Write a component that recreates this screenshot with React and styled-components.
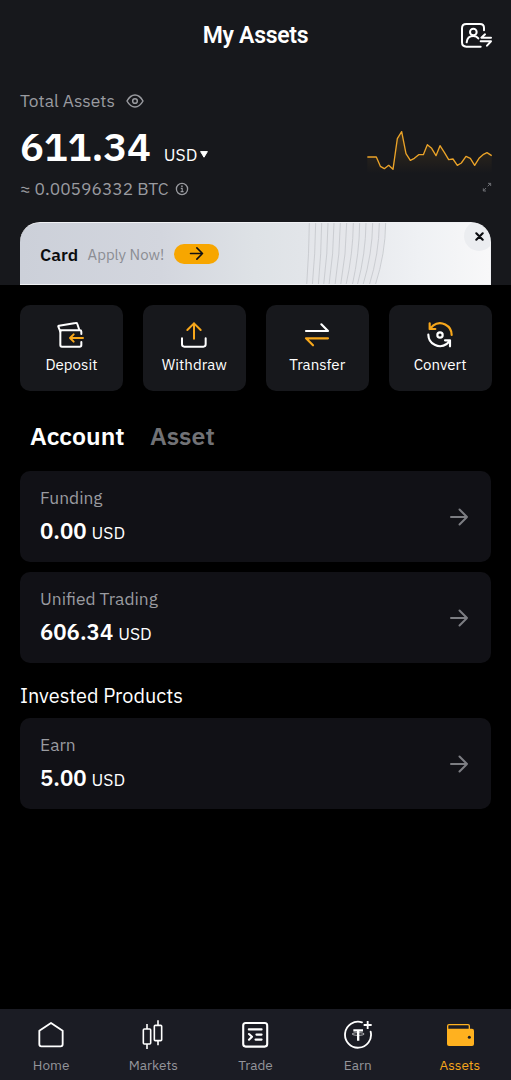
import React, { useState } from "react";
import styled, { createGlobalStyle } from "styled-components";

const gold = "#f7a71b";

const App = () => {
  const [tab, setTab] = useState("Account");
  const [banner, setBanner] = useState(true);

  return (
    <Page>
      <GlobalStyle />
      <Top>
        <Header>
          <Title>My Assets</Title>
          <ProfileButton aria-label="Profile">
            <ProfileIcon />
          </ProfileButton>
        </Header>
        <Overview>
          <Balance>
            <Label>
              <LabelText>Total Assets</LabelText>
              <EyeIcon />
            </Label>
            <Total>
              <Amount>611.34</Amount>
              <Currency>USD</Currency>
              <CaretIcon />
            </Total>
            <Btc>
              <BtcText>≈ 0.00596332 BTC</BtcText>
              <InfoIcon />
            </Btc>
          </Balance>
          <Trend>
            <Chart />
            <ExpandIcon />
          </Trend>
        </Overview>
        {banner && (
          <Banner>
            <Waves />
            <BannerTitle>Card</BannerTitle>
            <BannerText>Apply Now!</BannerText>
            <Pill>
              <Arrow size={15} color="#101014" weight={2.1} />
            </Pill>
            <Close aria-label="Close" onClick={() => setBanner(false)}>
              <svg width="9" height="9" viewBox="0 0 9 9">
                <path d="M1.3 1.3 7.7 7.7M7.7 1.3 1.3 7.7" stroke="#0b0c0f" strokeWidth="2.1" strokeLinecap="round" />
              </svg>
            </Close>
          </Banner>
        )}
      </Top>

      <Actions>
        {actions.map(({ name, Icon }) => (
          <Action key={name}>
            <Icon />
            <ActionName>{name}</ActionName>
          </Action>
        ))}
      </Actions>

      <Tabs>
        {["Account", "Asset"].map((name) => (
          <Tab key={name} $active={tab === name} onClick={() => setTab(name)}>
            {name}
          </Tab>
        ))}
      </Tabs>

      <List>
        <AccountRow name="Funding" value="0.00" />
        <AccountRow name="Unified Trading" value="606.34" />
      </List>
      <Heading>Invested Products</Heading>
      <List>
        <AccountRow name="Earn" value="5.00" />
      </List>

      <Nav>
        {links.map(({ name, Icon }) => (
          <NavItem key={name} $active={name === "Assets"}>
            <Icon />
            <NavName>{name}</NavName>
          </NavItem>
        ))}
      </Nav>
    </Page>
  );
};

const AccountRow = ({ name, value }) => (
  <Row>
    <div>
      <RowName>{name}</RowName>
      <RowValue>
        <strong>{value}</strong>
        <span>USD</span>
      </RowValue>
    </div>
    <Arrow size={20} color="#7c7d82" weight={2} />
  </Row>
);

const Arrow = ({ size, color, weight }) => (
  <svg width={size} height={size} viewBox="0 0 20 20" fill="none" stroke={color} strokeWidth={weight} strokeLinecap="round" strokeLinejoin="round">
    <path d="M2 10H18M10.5 2.500 18 10 10.5 17.500" />
  </svg>
);

const ProfileIcon = () => (
  <svg width="33" height="28" viewBox="330 60 99 84" fill="none" stroke="#fff" strokeWidth="6" strokeLinecap="round" strokeLinejoin="round">
    <path d="M402 88V81Q402 69 390 69H349Q336 69 336 82V124Q336 137 349 137H392" />
    <circle cx="370" cy="93" r="10" />
    <path d="M350 124Q352 105 370 105Q380 105 385 112" />
    <path d="M405 100 394 110H423M392 121H423L411 134" />
  </svg>
);

const EyeIcon = () => (
  <svg width="18" height="14" viewBox="378 41 54 42" fill="none" stroke="#9a9ba0" strokeWidth="4.5">
    <path d="M381 62Q391 44 405 44Q419 44 429 62Q419 80 405 80Q391 80 381 62Z" strokeLinejoin="round" />
    <circle cx="405" cy="62" r="7" />
  </svg>
);

const CaretIcon = () => (
  <Caret width="8" height="7" viewBox="0 0 8 7">
    <path d="M.6.6H7.4L4 6.2Z" fill="#fff" stroke="#fff" strokeLinejoin="round" />
  </Caret>
);

const InfoIcon = () => (
  <svg width="14" height="14" viewBox="0 0 14 14" fill="none" stroke="#9a9ba0" strokeWidth="1.3">
    <circle cx="7" cy="7" r="5.6" />
    <path d="M5.8 6.4H7.2V9.5M5.6 9.6H8.6" strokeWidth="1.1" />
    <path d="M6.2 4.3H7.7" strokeWidth="1.4" />
  </svg>
);

const ExpandIcon = () => (
  <svg width="10" height="10" viewBox="395 547 30 30" fill="none" stroke="#6e6f74" strokeWidth="3">
    <path d="M413 551H421V559M421 551 412 560M399 566V574H407M399 574 407 565" />
  </svg>
);

const line =
  "M51 471H78L90 499 102 506 115 496 128 508 141 416 154 395 167 461 180 481 192 475 205 464H219L231 434 244 445 257 467 269 437 282 457 295 479 308 477 321 496 333 489 347 469 360 475 373 496 386 475 398 464 410 458 424 467";

const Chart = () => (
  <svg width="125" height="48" viewBox="50 387 375 144" fill="none">
    <defs>
      <linearGradient id="fade" x1="0" y1="0" x2="0" y2="1">
        <stop offset="0" stopColor={gold} stopOpacity="0.16" />
        <stop offset="1" stopColor={gold} stopOpacity="0" />
      </linearGradient>
    </defs>
    <path d={`${line}V520H51Z`} fill="url(#fade)" />
    <path d={line} stroke="#eba328" strokeWidth="4" strokeLinejoin="round" />
  </svg>
);

// [top x, bottom x] of each curved stripe
const stripes = [
  [148, 140], [167, 157], [185, 175], [204, 191], [222, 207], [241, 225], [260, 242],
  [280, 258], [299, 277], [318, 292], [338, 309], [358, 328], [377, 346],
];

const Waves = () => (
  <WavesSvg width="84" height="62" viewBox="132 38 252 186" fill="none">
    <path d="M148 38H377Q372 130 346 224H140Q150 130 148 38Z" fill="#e4e6ea" opacity=".7" />
    {stripes.map(([a, b]) => (
      <path key={a} d={`M${a} 38Q${a - 1} ${130} ${b} 224`} stroke="#c6c8cd" strokeWidth="2.6" />
    ))}
  </WavesSvg>
);

const DepositIcon = () => (
  <svg width="28" height="28" viewBox="172 77 84 84" fill="none" stroke="#fff" strokeWidth="6" strokeLinecap="round" strokeLinejoin="round">
    <path d="M245 116V109Q245 105 241 105H182V149Q182 154 187 154H240Q245 154 245 149V140" />
    <path d="M182 109 176 94Q175 92 178 91L228 83Q232 82 233 86L239 104" />
    <path d="M250 128H211M222 117 211 128 222 139" stroke={gold} />
  </svg>
);

const WithdrawIcon = () => (
  <svg width="28" height="28" viewBox="541 77 84 84" fill="none" stroke="#fff" strokeWidth="6" strokeLinecap="round" strokeLinejoin="round">
    <path d="M547 129V147Q547 154 554 154H611Q618 154 618 147V129" />
    <path d="M583 130V84M563 104 583 84 603 104" stroke={gold} />
  </svg>
);

const TransferIcon = () => (
  <svg width="28" height="28" viewBox="141 77 84 84" fill="none" stroke="#fff" strokeWidth="6.5" strokeLinecap="round" strokeLinejoin="round">
    <path d="M150 107H216L196 87" />
    <path d="M216 129H150L171 150" stroke={gold} />
  </svg>
);

const ConvertIcon = () => (
  <svg width="28" height="28" viewBox="510 77 84 84" fill="none" stroke="#fff" strokeWidth="6.5" strokeLinecap="round" strokeLinejoin="round">
    <path d="M517 118A35 35 0 0 0 572 146L582 136M567 135H582V153" />
    <path d="M587 119A35 35 0 0 0 531 91L521 101M521 84V101H538" stroke={gold} />
    <circle cx="552" cy="119" r="8" />
  </svg>
);

const HomeIcon = () => (
  <svg width="28" height="30" viewBox="111 60 84 90" fill="none" stroke="#fff" strokeWidth="5.5" strokeLinejoin="round">
    <path d="M118 92 153 69 188 92V133Q188 139 182 139H124Q118 139 118 133Z" />
  </svg>
);

const MarketsIcon = () => (
  <svg width="28" height="30" viewBox="417 60 84 90" fill="none" stroke="#fff" strokeWidth="4.8">
    <rect x="430" y="87" width="22" height="45" rx="3" />
    <rect x="463" y="76" width="22" height="46" rx="3" />
    <path d="M441 72V87M441 132V147M474 61V76M474 122V136" />
  </svg>
);

const TradeIcon = () => (
  <svg width="28" height="30" viewBox="0 0 28 30" fill="none" stroke="#fff" strokeWidth="2.1" strokeLinecap="round" strokeLinejoin="round">
    <rect x="2.2" y="3" width="24" height="23.600" rx="2.5" />
    <path d="M7.8 9.4H20.6M15.4 14.6H20.6M14.5 19.6H20.6M8 14 11 16.8 8 19.700" />
  </svg>
);

const EarnIcon = () => (
  <svg width="28" height="30" viewBox="263 60 84 90" fill="none" stroke="#fff" strokeWidth="5.5">
    <path d="M317 67A39 39 0 1 0 343 95" strokeLinecap="round" />
    <path d="M291 91H320M305.500 91V122" strokeWidth="7" />
    <ellipse cx="305.500" cy="102" rx="18" ry="4" strokeWidth="2" />
    <path d="M334 63V87M322 75H346" strokeWidth="5.5" />
  </svg>
);

const AssetsIcon = () => (
  <svg width="28" height="30" viewBox="570 60 84 90" fill="none">
    <path d="M575 88V78Q575 74 579 74H636Q640 74 640 78V88" stroke="#ffb11f" strokeWidth="4" />
    <path d="M573 86H648Q654 86 654 92V132Q654 138 648 138H579Q573 138 573 132Z" fill="#ffb11f" />
    <circle cx="640" cy="112" r="4.500" fill="#1b1c24" />
  </svg>
);

const actions = [
  { name: "Deposit", Icon: DepositIcon },
  { name: "Withdraw", Icon: WithdrawIcon },
  { name: "Transfer", Icon: TransferIcon },
  { name: "Convert", Icon: ConvertIcon },
];

const links = [
  { name: "Home", Icon: HomeIcon },
  { name: "Markets", Icon: MarketsIcon },
  { name: "Trade", Icon: TradeIcon },
  { name: "Earn", Icon: EarnIcon },
  { name: "Assets", Icon: AssetsIcon },
];

const GlobalStyle = createGlobalStyle`
  * {
    box-sizing: border-box;
  }
  body {
    margin: 0;
    background: #000;
  }
  button {
    padding: 0;
    border: none;
    background: none;
    font: inherit;
    color: inherit;
    cursor: pointer;
  }
  svg {
    display: block;
    flex-shrink: 0;
  }
`;

const Page = styled.div`
  display: flex;
  flex-direction: column;
  width: 100%;
  height: 1080px;
  background: #000;
  color: #fff;
  font-family: "IBM Plex Sans", "Open Sans", sans-serif;
  white-space: nowrap;
`;

const Top = styled.header`
  height: 285px;
  background: #17181c;
  overflow: hidden;
`;

const Header = styled.div`
  display: grid;
  grid-template-columns: 33px 1fr 33px;
  align-items: center;
  height: 70px;
  padding: 0 18px;
`;

const Title = styled.h1`
  grid-column: 2;
  margin: 0;
  text-align: center;
  font-family: Roboto, sans-serif;
  font-size: 23px;
  font-weight: 600;
  letter-spacing: -0.3px;
`;

const ProfileButton = styled.button`
  padding-bottom: 1px;
`;

const Overview = styled.div`
  display: flex;
  justify-content: space-between;
  height: 152px;
  padding: 20px 19px 0 20px;
`;

const Balance = styled.div`
  display: flex;
  flex-direction: column;
`;

const Label = styled.div`
  display: flex;
  align-items: center;
  gap: 11px;
  height: 22px;
  color: #9a9ba0;
`;

const LabelText = styled.span`
  padding-bottom: 2px;
  font-size: 17.4px;
`;

const Total = styled.div`
  display: flex;
  align-items: baseline;
  height: 64px;
  line-height: 69px;
`;

const Amount = styled.span`
  font-size: 40px;
  font-weight: 600;
  letter-spacing: -0.2px;
`;

const Currency = styled.span`
  margin-left: 13px;
  font-size: 17.4px;
`;

const Caret = styled.svg`
  margin-left: 3px;
  align-self: center;
  margin-top: 21px;
`;

const Btc = styled.div`
  display: flex;
  align-items: center;
  gap: 6px;
  height: 26px;
  color: #9a9ba0;
`;

const BtcText = styled.span`
  padding-bottom: 2px;
  font-size: 17.4px;
`;

const Trend = styled.div`
  display: flex;
  flex-direction: column;
  align-items: flex-end;
  gap: 5px;
  padding-top: 39px;
`;

const Banner = styled.div`
  position: relative;
  display: flex;
  align-items: center;
  height: 63px;
  margin: 0 20px;
  padding: 0 0 0 20px;
  border-radius: 20px 20px 0 0;
  border: 1px solid #f0f1f4;
  border-left: none;
  overflow: hidden;
  background: linear-gradient(90deg, #ccd0d9 0%, #d3d6de 30%, #dee2e6 50%, #e7e9ed 72%, #eff1f4 85%, #f8f8f9 100%);
`;

const WavesSvg = styled.svg`
  position: absolute;
  left: 284px;
  top: 0;
`;

const BannerTitle = styled.span`
  color: #0b0c0f;
  font-size: 17.4px;
  font-weight: 600;
  padding-top: 1px;
`;

const BannerText = styled.span`
  margin-left: 9.5px;
  padding-top: 1px;
  color: #8b8d93;
  font-size: 15px;
`;

const Pill = styled.span`
  display: flex;
  align-items: center;
  justify-content: center;
  width: 45px;
  height: 20px;
  margin-left: 9.5px;
  border-radius: 10px;
  background: #f7a600;
`;

const Close = styled.button`
  position: absolute;
  top: -2px;
  right: -4px;
  display: grid;
  place-items: center;
  width: 30px;
  height: 30px;
  border-radius: 50%;
  background: #ebedf0;
`;

const Actions = styled.section`
  display: grid;
  grid-template-columns: repeat(4, 1fr);
  gap: 20px;
  padding: 20px 19.5px 0 20px;
`;

const Action = styled.button`
  display: flex;
  flex-direction: column;
  align-items: center;
  height: 86px;
  padding-top: 16px;
  border-radius: 10px;
  background: #17181c;
`;

const ActionName = styled.span`
  margin-top: 5px;
  font-size: 15.1px;
  line-height: 22px;
`;

const Tabs = styled.div`
  display: flex;
  gap: 25.5px;
  height: 80px;
  padding: 0 30px;
`;

const Tab = styled.button`
  height: 88px;
  color: ${(props) => (props.$active ? "#fff" : "#717276")};
  font-size: 24.9px;
  font-weight: 600;
`;

const List = styled.section`
  display: flex;
  flex-direction: column;
  gap: 10px;
  padding: 0 20px;
`;

const Row = styled.article`
  display: flex;
  align-items: center;
  justify-content: space-between;
  height: 91px;
  padding: 0 22px 0 20px;
  border-radius: 10px;
  background: #111116;
`;

const RowName = styled.div`
  padding-top: 4px;
  color: #9a9ba0;
  font-size: 17.4px;
  line-height: 24px;
`;

const RowValue = styled.div`
  display: flex;
  align-items: baseline;
  gap: 5px;
  margin-top: 2px;
  line-height: 38px;

  strong {
    font-size: 22.2px;
    font-weight: 600;
  }
  span {
    font-size: 17.4px;
  }
`;

const Heading = styled.h2`
  margin: 0;
  padding: 0 20px;
  font-size: 19.9px;
  font-weight: 400;
  line-height: 66px;
  height: 55px;
`;

const Nav = styled.nav`
  display: grid;
  grid-template-columns: repeat(5, 1fr);
  height: 71px;
  margin-top: auto;
  background: #1b1c24;
`;

const NavItem = styled.button`
  display: flex;
  flex-direction: column;
  align-items: center;
  padding-top: 11px;
  color: ${(props) => (props.$active ? gold : "#94959b")};
`;

const NavName = styled.span`
  margin-top: 4px;
  font-size: 13.6px;
  line-height: 22px;
`;

export default App;
